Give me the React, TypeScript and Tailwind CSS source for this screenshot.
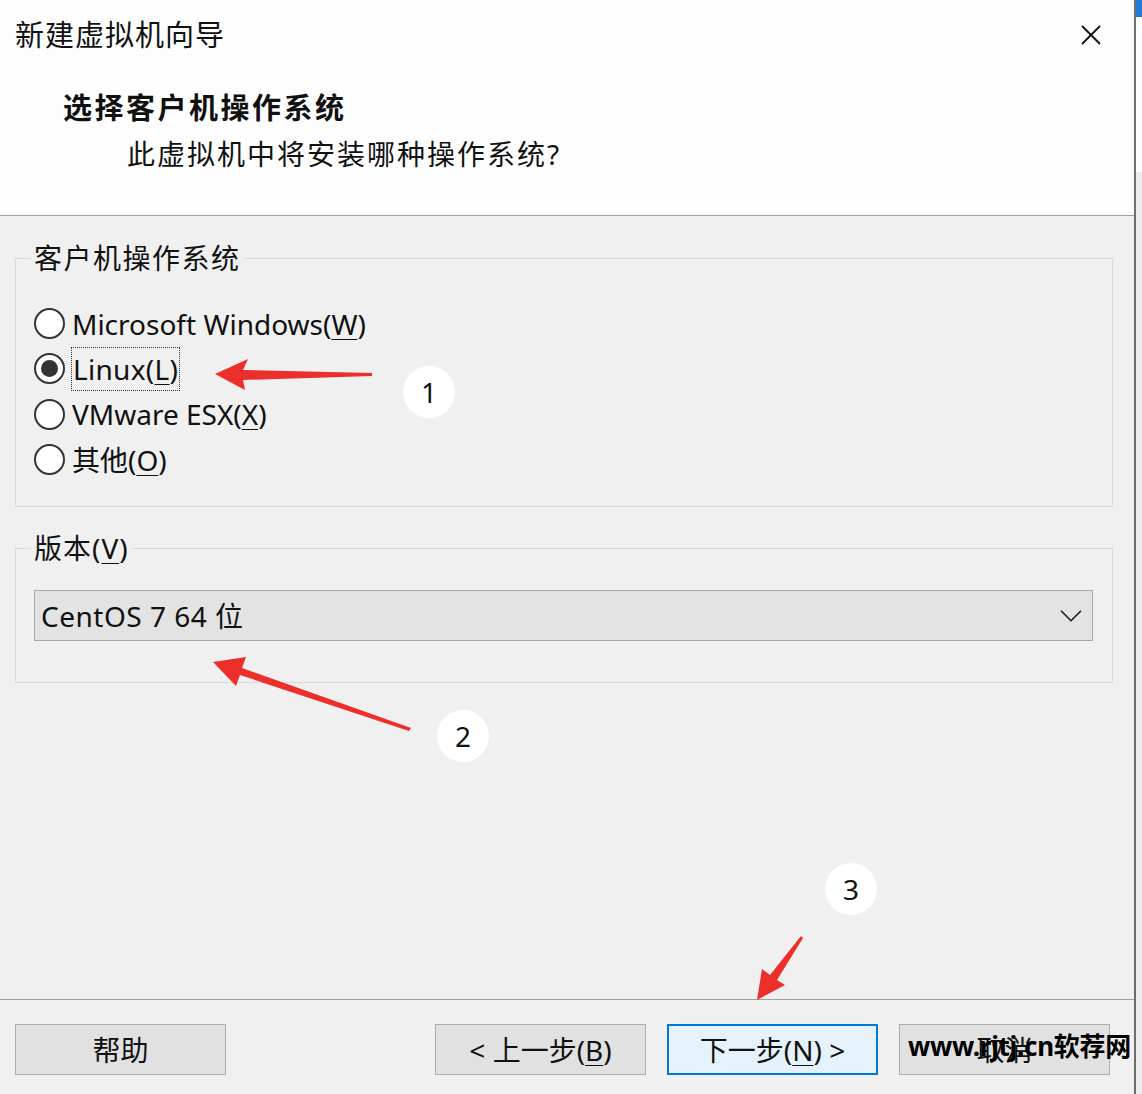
import { X, ChevronDown } from "lucide-react";

const font = "font-['Noto_Sans','Noto_Sans_CJK_SC',sans-serif]";

type Choice = { label: string; key: string; rest?: string; checked?: boolean };

const choices: Choice[] = [
  { label: "Microsoft Windows(", key: "W", rest: ")" },
  { label: "Linux(", key: "L", rest: ")", checked: true },
  { label: "VMware ESX(", key: "X", rest: ")" },
  { label: "其他(", key: "O", rest: ")" },
];

function Radio({ item }: { item: Choice }) {
  const text = (
    <span className="leading-[34px]">
      {item.label}
      <u className="underline-offset-[4px] decoration-1">{item.key}</u>
      {item.rest}
    </span>
  );
  return (
    <div className="flex items-center h-[45.3px]">
      <span className="w-[31px] h-[31px] rounded-full border-2 border-[#333] bg-white flex items-center justify-center shrink-0 ml-[3px]">
        {item.checked && <span className="w-[17px] h-[17px] rounded-full bg-[#333]" />}
      </span>
      {item.checked ? (
        <span className="ml-[6px] px-[1px] border border-dotted border-[#333] tracking-[0.3px]">{text}</span>
      ) : (
        <span className="ml-[7px]">{text}</span>
      )}
    </div>
  );
}

function Button({ children, primary }: { children: React.ReactNode; primary?: boolean }) {
  return (
    <button
      type="button"
      className={`w-[211px] h-[51px] text-[28px] text-[#111] flex items-center justify-center shrink-0 ${
        primary ? "bg-[#e5f1fb] border-2 border-[#0078d7]" : "bg-[#e1e1e1] border border-[#adadad]"
      }`}
    >
      {children}
    </button>
  );
}

function Badge({ n, x, y }: { n: number; x: number; y: number }) {
  return (
    <div
      className="absolute w-[52px] h-[52px] rounded-full bg-white flex items-center justify-center text-[28px] text-[#111]"
      style={{ left: x - 26, top: y - 26 }}
    >
      {n}
    </div>
  );
}

export default function App() {
  return (
    <div className={`relative w-[1142px] h-[1094px] flex overflow-hidden text-[#111] ${font}`}>
      <div className="w-[1136px] flex flex-col bg-[#f0f0f0] border-r-2 border-[#6e6e6e] shrink-0">
        {/* header */}
        <div className="h-[216px] bg-[#fdfdfd] border-b border-[#a0a0a0] shrink-0">
          <div className="flex items-center justify-between pt-[17px] pl-[15px] pr-[26px]">
            <span className="text-[29px] leading-[36px] tracking-[1px]">新建虚拟机向导</span>
            <X size={34} strokeWidth={1.3} className="text-[#111]" />
          </div>
          <div className="mt-[37px] pl-[63px] text-[29px] leading-[36px] font-bold tracking-[2.5px]">
            选择客户机操作系统
          </div>
          <div className="mt-[10px] pl-[127px] text-[28px] leading-[36px] tracking-[2px]">
            此虚拟机中将安装哪种操作系统?
          </div>
        </div>

        {/* body */}
        <div className="flex-1 px-[15px] pt-[27px] flex flex-col">
          <fieldset className="w-[1098px] border border-[#d9d9d9] pl-[15px] pb-[24px]">
            <legend className="px-[3px] text-[28px] leading-[30px] tracking-[1.5px]">客户机操作系统</legend>
            <div className="mt-[28px] flex flex-col text-[28px]">
              {choices.map((c) => (
                <Radio key={c.key} item={c} />
              ))}
            </div>
          </fieldset>

          <fieldset className="w-[1098px] mt-[26px] border border-[#d9d9d9] pl-[15px] pr-[19px] pb-[41px]">
            <legend className="px-[3px] text-[28px] leading-[30px] tracking-[1px]">
              版本(<u className="underline-offset-[4px] decoration-1">V</u>)
            </legend>
            <div className="mt-[27px] ml-[3px] h-[51px] bg-[#e3e3e3] border border-[#a9a9a9] flex items-center justify-between pl-[6px] pr-[2px]">
              <span className="text-[28px] tracking-[0.5px]">CentOS 7 64 位</span>
              <ChevronDown size={38} strokeWidth={1.1} className="text-[#222]" />
            </div>
          </fieldset>
        </div>

        {/* footer */}
        <div className="h-[95px] border-t border-[#a0a0a0] flex pt-[24px] pl-[15px] gap-[21px] shrink-0">
          <Button>帮助</Button>
          <div className="w-[167px] shrink-0" />
          <Button>
            &lt; 上一步(<u className="underline-offset-[4px] decoration-1">B</u>)
          </Button>
          <Button primary>
            下一步(<u className="underline-offset-[4px] decoration-1">N</u>) &gt;
          </Button>
          <Button>取消</Button>
        </div>
      </div>

      {/* part of the window behind */}
      <div className="flex-1 flex flex-col">
        <div className="h-[17px] bg-[#1f7ad6]" />
        <div className="h-[155px] bg-white" />
        <div className="flex-1 bg-[#ececec]" />
      </div>

      {/* annotations */}
      <svg className="absolute inset-0 pointer-events-none" width="1142" height="1094" viewBox="0 0 1142 1094">
        <polygon points="215,374 248,359 243,370 372,373 372,376 243,380 245,390" fill="#ec2f2a" />
        <polygon points="213,662 246,657 242,668 411,728 409,731 240,675 236,686" fill="#ec2f2a" />
        <polygon points="757,1000 762,969 770,975 801,936 803,938 777,980 785,985" fill="#ec2f2a" />
      </svg>
      <Badge n={1} x={429} y={392} />
      <Badge n={2} x={463} y={736} />
      <Badge n={3} x={851} y={889} />

      <div className="absolute left-[908px] top-[1030px] text-[26px] leading-[32px] font-bold text-black pointer-events-none whitespace-nowrap tracking-[-0.3px]">
        www.rjtj.cn软荐网
      </div>
    </div>
  );
}
